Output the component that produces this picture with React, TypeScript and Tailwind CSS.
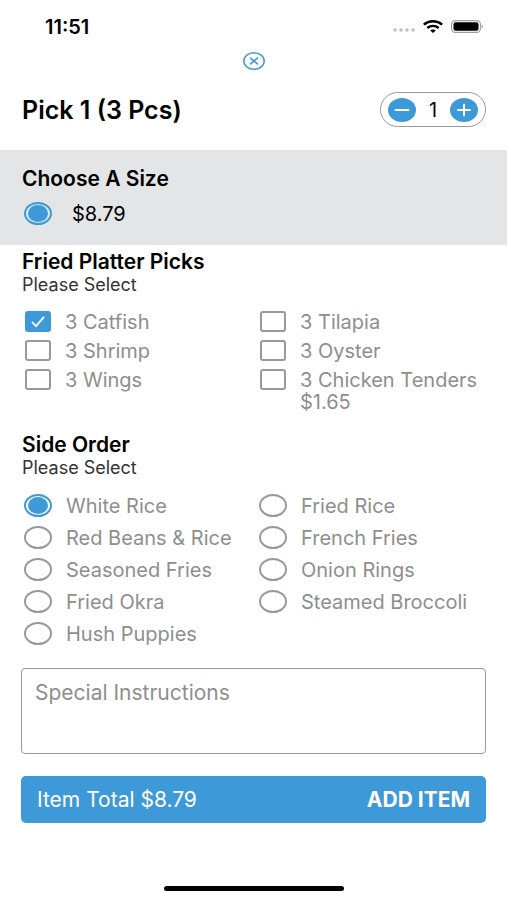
import { useState } from "react";

const RADIO =
  "h-[23px] w-7 shrink-0 cursor-pointer appearance-none rounded-[50%] border-2 border-[#999] bg-clip-content px-[2px] py-px checked:border-[#3d99d8] checked:bg-[#3d99d8]";

const PICKS = [
  { name: "3 Catfish" },
  { name: "3 Tilapia" },
  { name: "3 Shrimp" },
  { name: "3 Oyster" },
  { name: "3 Wings" },
  { name: "3 Chicken Tenders", price: "$1.65" },
];

const SIDES = [
  "White Rice",
  "Fried Rice",
  "Red Beans & Rice",
  "French Fries",
  "Seasoned Fries",
  "Onion Rings",
  "Fried Okra",
  "Steamed Broccoli",
  "Hush Puppies",
];

function StatusBar() {
  return (
    <div className="flex h-[52px] items-center justify-between pr-6 pl-[45px]">
      <span className="pt-[2px] text-[20px] leading-5 font-semibold">11:51</span>
      <div className="flex items-center gap-2">
        <svg className="mt-2 h-1 w-[22px]" viewBox="0 0 22 4" fill="#c0c0c0" aria-hidden="true">
          <circle cx="2" cy="2" r="1.8" />
          <circle cx="8" cy="2" r="1.8" />
          <circle cx="14" cy="2" r="1.8" />
          <circle cx="20" cy="2" r="1.8" />
        </svg>
        <svg className="h-[13px] w-5" viewBox="0 0 20 13" fill="none" stroke="#000" strokeWidth="2.4" aria-hidden="true">
          <path d="M0.8 4.6C6 .1 14 .1 19.2 4.6" />
          <path d="M4.3 8C7.5 5.2 12.5 5.2 15.7 8" />
          <path d="M7.2 10.6C8.7 9.1 11.3 9.1 12.8 10.6L10 13Z" fill="#000" stroke="none" />
        </svg>
        <svg className="h-[13px] w-8" viewBox="0 0 32 13" aria-hidden="true">
          <rect x="0.6" y="0.6" width="28.8" height="11.8" rx="3.6" fill="none" stroke="#a0a0a0" strokeWidth="1.2" />
          <rect x="2.5" y="2.2" width="25" height="8.6" rx="2" />
          <path d="M30.7 4.6C32.4 5.2 32.4 7.8 30.7 8.4Z" fill="#a0a0a0" />
        </svg>
      </div>
    </div>
  );
}

export default function App() {
  const [quantity, setQuantity] = useState(1);

  return (
    <div className="flex min-h-screen flex-col bg-white font-['Inter','Liberation_Sans',sans-serif] text-[20px] leading-[22px] text-black">
      <StatusBar />

      <div className="flex justify-center">
        <button type="button" aria-label="Close" className="h-[18px] w-[22px]">
          <svg className="h-full w-full" viewBox="0 0 22 18" fill="none" stroke="#3d99d8" strokeWidth="1.5" aria-hidden="true">
            <ellipse cx="11" cy="9" rx="10.2" ry="8.2" />
            <path d="M7 5.6L15 12.4M15 5.6L7 12.4" />
          </svg>
        </button>
      </div>

      <header className="flex items-center justify-between pt-[22px] pr-[21px] pb-[23px] pl-[22px]">
        <h1 className="text-[25px] leading-[26px] font-semibold">Pick 1 (3 Pcs)</h1>
        <div className="flex h-[35px] w-[106px] items-center justify-between rounded-full border border-[#999] px-[7px]">
          <button type="button" aria-label="Decrease quantity" onClick={() => setQuantity(Math.max(1, quantity - 1))}>
            <svg className="h-6 w-7" viewBox="0 0 28 24" aria-hidden="true">
              <ellipse cx="14" cy="12" rx="14" ry="12" fill="#3d99d8" />
              <path d="M7.5 12H20.5" stroke="#fff" strokeWidth="2" strokeLinecap="round" />
            </svg>
          </button>
          <output>{quantity}</output>
          <button type="button" aria-label="Increase quantity" onClick={() => setQuantity(quantity + 1)}>
            <svg className="h-6 w-7" viewBox="0 0 28 24" aria-hidden="true">
              <ellipse cx="14" cy="12" rx="14" ry="12" fill="#3d99d8" />
              <path d="M8 12H20M14 6.8V17.2" stroke="#fff" strokeWidth="2" strokeLinecap="round" />
            </svg>
          </button>
        </div>
      </header>

      <section className="bg-[#e3e5e7] px-[22px] pt-[17px] pb-5">
        <h2 className="text-[21px] leading-[23px] font-semibold">Choose A Size</h2>
        <label className="mt-3 ml-[2px] flex items-center gap-5">
          <input type="radio" name="size" defaultChecked className={RADIO} />
          <span>$8.79</span>
        </label>
      </section>

      <section className="pt-[5px]">
        <h2 className="px-[22px] text-[21px] leading-[23px] font-semibold">Fried Platter Picks</h2>
        <p className="px-[22px] text-[18px] leading-[23px] text-[#333]">Please Select</p>
        <div className="mt-[15px] grid grid-cols-2 gap-y-[7px] pr-[13px] pl-6 text-[#8e8e8e]">
          {PICKS.map((pick, i) => (
            <label key={pick.name} className="flex cursor-pointer items-start gap-[13px]">
              <span className="mx-px grid h-[21px] w-[26px] shrink-0">
                <input
                  type="checkbox"
                  name="picks"
                  defaultChecked={i === 0}
                  className="peer col-start-1 row-start-1 h-[21px] w-[26px] cursor-pointer appearance-none rounded-[3px] border-2 border-[#999] checked:border-[#3d99d8] checked:bg-[#3d99d8]"
                />
                <svg
                  className="pointer-events-none invisible col-start-1 row-start-1 h-[21px] w-[26px] peer-checked:visible"
                  viewBox="0 0 26 21"
                  fill="none"
                  stroke="#fff"
                  strokeWidth="1.8"
                  aria-hidden="true"
                >
                  <path d="M7 11L11 15.2L19 5.8" />
                </svg>
              </span>
              <span>
                {pick.name}
                {pick.price && <span className="block">{pick.price}</span>}
              </span>
            </label>
          ))}
        </div>
      </section>

      <section className="pt-5">
        <h2 className="px-[22px] text-[21px] leading-[23px] font-semibold">Side Order</h2>
        <p className="px-[22px] text-[18px] leading-[23px] text-[#333]">Please Select</p>
        <div className="mt-[15px] grid grid-cols-2 gap-y-[9px] pr-[13px] pl-6 text-[#8e8e8e]">
          {SIDES.map((side, i) => (
            <label key={side} className="flex cursor-pointer items-center gap-[14px]">
              <input type="radio" name="side" defaultChecked={i === 0} className={RADIO} />
              <span>{side}</span>
            </label>
          ))}
        </div>
      </section>

      <div className="flex flex-col gap-[22px] px-[21px] pt-[23px] text-[21px]">
        <textarea
          aria-label="Special Instructions"
          placeholder="Special Instructions"
          className="block h-[86px] w-full resize-none rounded-[4px] border border-[#999] px-[13px] py-[13px] outline-none placeholder:text-[#8e8e8e]"
        />
        <button type="button" className="flex h-[47px] items-center justify-between rounded-[5px] bg-[#3d99d8] px-4 text-white">
          <span>Item Total $8.79</span>
          <span className="font-bold">ADD ITEM</span>
        </button>
      </div>

      <div className="mt-auto flex justify-center pb-[9px]">
        <div className="h-[5px] w-[180px] rounded-full bg-black" />
      </div>
    </div>
  );
}
